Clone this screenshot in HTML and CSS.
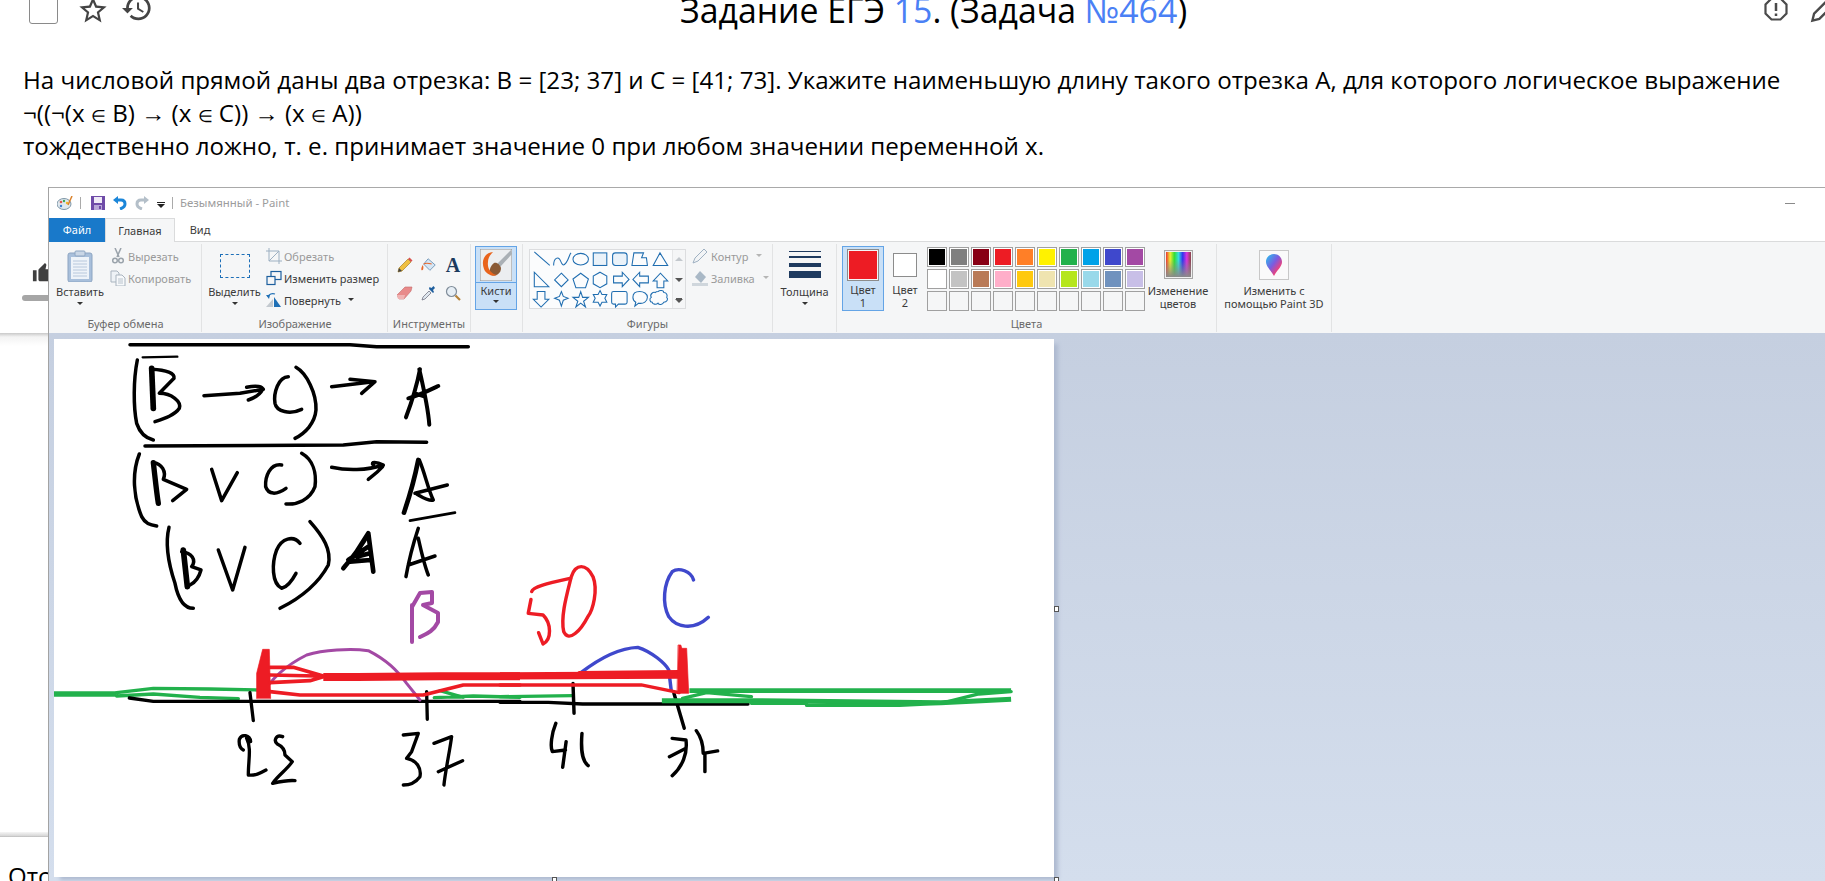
FILE: index.html
```html
<!DOCTYPE html>
<html lang="ru">
<head>
<meta charset="utf-8">
<title>Задание ЕГЭ 15</title>
<link rel="stylesheet" href="styles.css">
</head>
<body>
<main class="page">
  <header class="topbar">
    <div class="top-left">
      <span class="checkbox"></span>
      <svg class="ic-star" viewBox="1 1 22 21"><path d="M22 9.24l-7.19-.62L12 2 9.19 8.63 2 9.24l5.46 4.73L5.82 21 12 17.27 18.18 21l-1.63-7.03L22 9.24zM12 15.4l-3.76 2.27 1-4.28-3.32-2.88 4.38-.38L12 6.1l1.71 4.04 4.38.38-3.32 2.88 1 4.28L12 15.4z"/></svg>
      <svg class="ic-history" viewBox="1 3 22 18"><path d="M13 3c-4.97 0-9 4.03-9 9H1l3.89 3.89.07.14L9 12H6c0-3.87 3.13-7 7-7s7 3.13 7 7-3.13 7-7 7c-1.93 0-3.68-.79-4.94-2.06l-1.42 1.42C8.27 19.99 10.51 21 13 21c4.97 0 9-4.03 9-9s-4.03-9-9-9zm-1 5v5l4.28 2.54.72-1.21-3.5-2.08V8H12z"/></svg>
    </div>
    <h1 class="title">Задание ЕГЭ <a href="#">15</a>. (Задача <a href="#">№464</a>)</h1>
    <div class="top-right">
      <svg class="ic-report" viewBox="0 0 24 24"><polygon points="7.5,1.5 16.5,1.5 22.5,7.5 22.5,16.5 16.5,22.5 7.5,22.5 1.5,16.5 1.5,7.5"/><path class="mark" d="M12 6v8M12 16.5v2.5"/></svg>
      <svg class="ic-edit" viewBox="0 0 24 24"><path d="M2 22l1.5-6L17 2.5l4.5 4.500L8 20.500z"/></svg>
    </div>
  </header>
  <p class="statement">На числовой прямой даны два отрезка: B = [23; 37] и C = [41; 73]. Укажите наименьшую длину такого отрезка A, для которого логическое выражение<br>¬((¬(x <span class="el">∈</span> B) <span class="sym">→</span> (x <span class="el">∈</span> C)) <span class="sym">→</span> (x <span class="el">∈</span> A))<br>тождественно ложно, т. е. принимает значение 0 при любом значении переменной x.</p>
  <div class="like-row">
    <svg class="ic-thumb" viewBox="0 0 24 24"><path d="M1 21h4V9H1v12zm22-11c0-1.100-.9-2-2-2h-6.310l.95-4.570.03-.32c0-.41-.17-.79-.44-1.060L14.170 1 7.590 7.590C7.220 7.950 7 8.450 7 9v10c0 1.100.9 2 2 2h9c.83 0 1.540-.5 1.840-1.220l3.020-7.050c.09-.23.14-.47.14-.73v-2z"/></svg>
  </div>
  <div class="like-bar"></div>
  <div class="card-edge"></div>
  <div class="card-foot"></div>
  <div class="answers">Отсортировать</div>
</main>

<section class="paint">
  <div class="titlebar">
    <svg class="qa ic-app" viewBox="0 0 16 14"><ellipse cx="7" cy="8" rx="7" ry="5.500" fill="#dfe8ee" stroke="#7f97a8"/><circle cx="4" cy="6" r="1.300" fill="#e05a4e"/><circle cx="7" cy="5" r="1.200" fill="#3aa655"/><circle cx="10" cy="7" r="1.200" fill="#f0b429"/><circle cx="4" cy="10" r="1.200" fill="#3a7fd0"/><path d="M11 9L15 0" stroke="#d9822b" stroke-width="1.500"/></svg>
    <span class="qa-sep"></span>
    <svg class="qa ic-save" viewBox="0 0 14 14"><path fill="#6f4ba8" d="M0 0h14v14H0z"/><path fill="#efeaf6" d="M3 1h8v6H3z"/><path fill="#b9a7d8" d="M3 9h8v5H3z"/><path fill="#6f4ba8" d="M8 10h2v3H8z"/></svg>
    <svg class="qa ic-undo" viewBox="0 0 14 14"><path fill="none" stroke="#1b86d9" stroke-width="3" d="M3 4h5c3 0 4 2 4 4s-2 4-5 5"/><path fill="#1b86d9" d="M5 0v8L0 4z"/></svg>
    <svg class="qa ic-redo" viewBox="0 0 14 14"><path fill="none" stroke="#b4bfc9" stroke-width="3" d="M11 4H6C3 4 2 6 2 8s2 4 5 5"/><path fill="#b4bfc9" d="M9 0v8l5-4z"/></svg>
    <svg class="qa ic-more" viewBox="0 0 8 6"><path d="M0 0h8v1H0zM0 2h8L4 6z" fill="#222"/></svg>
    <span class="qa-sep sep2"></span>
    <span class="win-title">Безымянный - Paint</span>
    <span class="win-min"></span>
  </div>
  <nav class="tabs">
    <span class="tab tab-file">Файл</span>
    <span class="tab tab-home">Главная</span>
    <span class="tab tab-view">Вид</span>
  </nav>
  <div class="ribbon">
    <div class="grp g1">
      <div class="grp-body">
        <div class="big w60">
          <svg class="big-ic" viewBox="0 0 32 32"><rect x="4" y="3" width="24" height="29" rx="2" fill="#a8bfdb" stroke="#8da5c2"/><rect x="7" y="7" width="18" height="22" fill="#eef3f9"/><path d="M9 11h14M9 14h14M9 17h14M9 20h14M9 23h14M9 26h14" stroke="#b8c8dc"/><rect x="11" y="1" width="10" height="5" rx="1" fill="#c9d6e6" stroke="#8da5c2"/></svg>
          <span class="lbl">Вставить</span><i class="caret"></i>
        </div>
        <div class="smalls">
          <div class="small off"><svg viewBox="0 0 16 16"><path d="M5 0l4 9M11 0L7 9" stroke="#9aa3ab" stroke-width="1.500" fill="none"/><circle cx="5" cy="12.500" r="2.300" fill="none" stroke="#9aa3ab" stroke-width="1.500"/><circle cx="11" cy="12.500" r="2.300" fill="none" stroke="#9aa3ab" stroke-width="1.500"/></svg>Вырезать</div>
          <div class="small off"><svg viewBox="0 0 16 16"><path d="M1 1h6l2 2v9H1z" fill="#eef2f6" stroke="#a9b4bf"/><path d="M6 5h6l3 3v8H6z" fill="#f7f9fb" stroke="#a9b4bf"/><path d="M8 9h5M8 11h5M8 13h5" stroke="#b8c2cc"/></svg>Копировать</div>
        </div>
      </div>
      <div class="grp-label">Буфер обмена</div>
    </div>
    <div class="grp g2">
      <div class="grp-body">
        <div class="big w63">
          <span class="select-ic"></span>
          <span class="lbl">Выделить</span><i class="caret"></i>
        </div>
        <div class="smalls">
          <div class="small off"><svg viewBox="0 0 16 16"><path d="M3 0v13h13M0 3h13v13M3 13L13 3" fill="none" stroke="#9db0c2"/></svg>Обрезать</div>
          <div class="small"><svg viewBox="0 0 16 16"><rect x="5" y="1.500" width="10" height="8" fill="none" stroke="#1d5f9e" stroke-width="1.200"/><rect x="1" y="6.500" width="8" height="8" fill="#f5f6f7" stroke="#1d5f9e" stroke-width="1.200"/></svg>Изменить размер</div>
          <div class="small"><svg viewBox="0 0 16 16"><path d="M0 15L7 7v8z" fill="#c3c9cf"/><path d="M8 15V5l7 10z" fill="#1f6fb5"/><path d="M2 5c1-3 4-4 7-3" fill="none" stroke="#1f6fb5" stroke-width="1.300"/><path d="M0 3l4 0-1 4z" fill="#1f6fb5"/></svg>Повернуть<i class="caret inl"></i></div>
        </div>
      </div>
      <div class="grp-label">Изображение</div>
    </div>
    <div class="grp g3">
      <div class="grp-body tools">
        <span class="tool"><svg viewBox="0 0 16 16"><path d="M1 15l1-4L11 2l3 3-9 9z" fill="#f0c040" stroke="#a9822b" stroke-width=".7"/><path d="M11 2l1.500-1.500 3 3L14 5z" fill="#d9534f"/><path d="M1 15l1-4 3 3z" fill="#444"/></svg></span>
        <span class="tool"><svg viewBox="0 0 18 16"><path d="M8 1l8 7-6 6-7-7z" fill="#d6e6f4" stroke="#6d93b5"/><path d="M2 8C0 11 0 14 1 14c1.500 0 2-3 1.500-5z" fill="#e8662a"/><path d="M3 7c3-2 6-1 9 0" fill="none" stroke="#e8662a" stroke-width="1.200"/></svg></span>
        <span class="tool tool-a">A</span>
        <span class="tool"><svg viewBox="0 0 16 16"><path d="M0 10l8-8h7l-1 4-7 8H2z" fill="#e88a8a" stroke="#c46a6a" stroke-width=".6"/><path d="M0 10l1 4h6l1-4z" fill="#f0b3b3"/></svg></span>
        <span class="tool"><svg viewBox="0 0 16 16"><path d="M1 15l1-3 6-6 2 2-6 6z" fill="#dfe7ee" stroke="#667"  stroke-width=".7"/><path d="M8 4l4 4 1-1-1-2 2-2-1.500-2-2 2-2-1z" fill="#1f5f9e"/></svg></span>
        <span class="tool"><svg viewBox="0 0 16 16"><circle cx="6.500" cy="6.500" r="5" fill="#e6eef5" stroke="#7f8c99" stroke-width="1.200"/><path d="M10.500 10.500L15 15" stroke="#b5823a" stroke-width="2.200"/></svg></span>
      </div>
      <div class="grp-label">Инструменты</div>
    </div>
    <div class="grp g4">
      <div class="grp-body">
        <div class="brush-btn">
          <div class="brush-top"><svg viewBox="0 0 32 32"><rect x="0" y="0" width="32" height="32" fill="#eceef0" stroke="#8f8f8f"/><path d="M31 1L17 15l3 3L32 5z" fill="#aab0b5"/><path d="M14 14c-4 3-6 10-3 12 4 2 10-1 10-7-1-3-4-6-7-5z" fill="#8a5a35"/><path d="M13 3C4 4 1 12 4 20c2 5 8 8 13 6-6-1-10-6-9-13 0-4 2-7 5-10z" fill="#e9641c"/></svg></div>
          <span class="lbl">Кисти</span><i class="caret"></i>
        </div>
      </div>
    </div>
    <div class="grp g5">
      <div class="grp-body">
        <div class="gallery">
          <svg class="shapes" viewBox="0 0 142 60">
            <g fill="none" stroke="#1f6db0" stroke-width="1.100">
              <path d="M2 2L18 16"/>
              <path d="M22 16c0-8 5-10 7-5s3 6 6 2 3-8 5-10"/>
              <ellipse cx="50" cy="9.500" rx="8" ry="6"/>
              <rect x="63" y="3" width="14" height="13" fill="#eaf2f9"/>
              <rect x="83" y="3" width="15" height="13" rx="3" fill="#eaf2f9"/>
              <path d="M105 3h10l-2 5h5l1 8h-16z"/>
              <path d="M132 3l8 13h-15z"/>
              <path d="M2 23v15h15z"/>
              <path d="M30 24l7 7-7 7-7-7z"/>
              <path d="M50 24l8 6-3 9h-10l-3-9z"/>
              <path d="M70 23l7 4v8l-7 4-7-4v-8z"/>
              <path d="M84 27h9v-4l7 7.500-7 7.500v-4h-9z"/>
              <path d="M120 27h-9v-4l-7 7.500 7 7.500v-4h9z"/>
              <path d="M125 32h4v7h7v-7h4l-7.500-8z"/>
              <path d="M5 43h8v8h4l-8 8-8-8h4z"/>
              <path d="M30 43l2 5 5 2-5 2-2 6-2-6-5-2 5-2z"/>
              <path d="M50 43l2 6h6l-5 4 2 6-5-4-5 4 2-6-5-4h6z"/>
              <path d="M70 42l2 4h5l-2 4 2 4h-5l-2 4-2-4h-5l2-4-2-4h5z"/>
              <path d="M84 43h12a2 2 0 0 1 2 2v9a2 2 0 0 1-2 2h-7l-3 3v-3h-2a2 2 0 0 1-2-2v-9a2 2 0 0 1 2-2z"/>
              <path d="M111 43c4 0 8 2 8 6s-4 7-9 6l-4 3 1-4c-2-1-3-3-3-5 0-4 3-6 7-6z"/>
              <path d="M130 43c2-2 6-1 6 1 3 0 4 3 3 5 2 2 0 5-3 5-1 3-5 3-6 1-2 2-6 1-6-1-3 0-3-4-1-5-2-3 2-6 4-5 1-1 2-1 3-1z"/>
            </g>
          </svg>
          <div class="gal-scroll">
            <i class="up"></i><i class="down"></i><i class="more"></i>
          </div>
        </div>
        <div class="smalls smalls-shape">
          <div class="small off"><svg viewBox="0 0 16 16"><path d="M1 15l2-5L12 1l3 3-9 9z" fill="#f2f4f6" stroke="#9fb1c2"/></svg>Контур<i class="caret inl pale"></i></div>
          <div class="small off"><svg viewBox="0 0 16 16"><path d="M8 1l6 6-5 6-6-6z" fill="#a9b8c6"/><path d="M0 13h16v3H0z" fill="#cfd6dc"/></svg>Заливка<i class="caret inl pale"></i></div>
        </div>
      </div>
      <div class="grp-label">Фигуры</div>
    </div>
    <div class="grp g6">
      <div class="grp-body">
        <div class="big full">
          <div class="thick"><i class="t1"></i><i class="t2"></i><i class="t3"></i><i class="t4"></i></div>
          <span class="lbl">Толщина</span><i class="caret"></i>
        </div>
      </div>
    </div>
    <div class="grp g7">
      <div class="grp-body">
        <div class="color-btn active">
          <span class="swatch-big"></span>
          <span class="lbl">Цвет<br>1</span>
        </div>
        <div class="color-btn">
          <span class="swatch-mid"></span>
          <span class="lbl">Цвет<br>2</span>
        </div>
        <div class="palette">
          <i class="c c1"></i><i class="c c2"></i><i class="c c3"></i><i class="c c4"></i><i class="c c5"></i><i class="c c6"></i><i class="c c7"></i><i class="c c8"></i><i class="c c9"></i><i class="c c10"></i>
          <i class="c c11"></i><i class="c c12"></i><i class="c c13"></i><i class="c c14"></i><i class="c c15"></i><i class="c c16"></i><i class="c c17"></i><i class="c c18"></i><i class="c c19"></i><i class="c c20"></i>
          <i class="c e"></i><i class="c e"></i><i class="c e"></i><i class="c e"></i><i class="c e"></i><i class="c e"></i><i class="c e"></i><i class="c e"></i><i class="c e"></i><i class="c e"></i>
        </div>
        <div class="big w66">
          <span class="rainbow"></span>
          <span class="lbl">Изменение<br>цветов</span>
        </div>
      </div>
      <div class="grp-label">Цвета</div>
    </div>
    <div class="grp g8">
      <div class="grp-body">
        <div class="big full">
          <span class="p3d-box"><svg viewBox="0 0 22 30"><defs><linearGradient id="p3d" x1="0" y1="0" x2="1" y2="1"><stop offset="0" stop-color="#22c8f0"/><stop offset=".45" stop-color="#7a5ce0"/><stop offset=".75" stop-color="#f0417a"/><stop offset="1" stop-color="#ffb020"/></linearGradient></defs><path d="M11 0c6 0 11 4.500 11 11 0 6-7 12-11 19C7 23 0 17 0 11 0 4.500 5 0 11 0z" fill="url(#p3d)"/></svg></span>
          <span class="lbl">Изменить с<br>помощью Paint 3D</span>
        </div>
      </div>
    </div>
  </div>
  <div class="workspace">
    <div class="canvas">
      <svg class="drawing" viewBox="54 339 1000 538" fill="none" stroke-linecap="round" stroke-linejoin="round">
        <g transform="translate(100 330) scale(.3333)" stroke="#000" stroke-width="10.500">
          <path d="M90 44H650L750 44 830 50H1105"/>
          <path d="M128 82L232 80" stroke-width="7"/>
          <path d="M112 90C100 150 100 230 110 280 120 310 140 325 160 330"/>
          <path d="M155 115L160 235" stroke-width="17"/>
          <path d="M155 118C200 120 225 130 222 145L178 190C215 190 245 215 238 235 225 255 195 265 165 275"/>
          <path d="M312 197L420 190 490 178M440 172C470 165 490 170 488 178 480 195 460 205 445 210"/>
          <path d="M565 140C535 140 520 190 525 220 530 245 570 255 605 238"/>
          <path d="M588 112C620 130 650 190 648 240 645 280 615 310 585 325"/>
          <path d="M695 170L820 155M750 148L825 155 785 190"/>
          <path d="M960 118C950 170 930 230 918 262M958 118C970 170 985 240 988 284M925 205C960 195 990 180 1015 168M945 190L975 200" stroke-width="12"/>
          <path d="M135 348L730 345 830 335 980 337"/>
          <path d="M118 372C95 430 100 500 125 560 135 580 150 585 170 588"/>
          <path d="M160 398C165 440 170 490 175 520" stroke-width="16"/>
          <path d="M160 398C185 400 200 425 190 448L260 478 218 512"/>
          <path d="M335 418L365 512 412 428"/>
          <path d="M545 405C510 400 495 440 497 470 505 495 530 495 558 475"/>
          <path d="M605 370C640 390 650 430 645 470 630 510 590 525 558 522"/>
          <path d="M695 412C740 422 800 422 850 405 830 395 810 395 820 405M848 410C830 430 815 440 805 448"/>
          <path d="M955 390C945 440 925 510 912 548" stroke-width="14"/>
          <path d="M958 390C975 430 985 480 1000 510 985 515 965 500 950 492M945 490L1042 465"/>
          <path d="M930 572L1065 548" stroke-width="8"/>
          <path d="M207 592C195 640 205 700 225 760 235 810 255 835 280 835"/>
          <path d="M250 660L262 770" stroke-width="17"/>
          <path d="M245 665C275 668 290 690 275 710L303 720C295 750 280 760 270 765"/>
          <path d="M355 660L398 780 435 652"/>
          <path d="M600 640C580 615 545 625 530 660 515 700 515 760 545 775 565 770 580 745 588 730"/>
          <path d="M630 575C670 620 695 660 685 705 650 770 590 810 540 835"/>
          <path d="M730 715C760 680 790 640 805 610L820 725M745 690L805 650M760 680L805 610M770 680L810 670M750 695L812 690" stroke-width="14"/>
          <path d="M955 595C940 640 925 700 918 740M955 625C965 670 975 710 985 735M925 705L1005 678"/>
        </g>
        <path stroke="#a349a4" stroke-width="4" d="M412 642V605M412 607L420 593 432 592 432 603 423 605 438 613 438 622C433 632 426 634 420 637"/>
        <g transform="translate(40 620) scale(.3333)" stroke-width="10">
          <g stroke="#22b14c">
            <path d="M42 222H230" stroke-width="17" stroke-linecap="butt"/>
            <path d="M230 218L340 205 510 207 655 210M230 228L340 222 480 232 595 236"/>
          </g>
          <g stroke="#000">
            <path d="M268 234L340 244H1440"/>
            <path d="M630 218L640 302M1160 215L1162 298"/>
            <path d="M632 365C630 345 605 340 598 358 596 375 600 385 610 390M620 355C635 385 625 420 625 465 645 468 660 460 678 450"/>
            <path d="M728 350C708 342 700 362 712 372 725 378 735 390 735 405L757 425C740 450 715 465 698 490 720 485 745 480 765 482"/>
            <path d="M1090 345L1135 340 1115 395 1100 415C1130 420 1145 445 1140 470 1125 490 1110 495 1090 495"/>
            <path d="M1182 370L1235 350C1230 390 1215 460 1212 495M1195 455L1268 422"/>
          </g>
          <path stroke="#22b14c" d="M1183 233L1300 228 1440 232M1200 212L1270 232"/>
          <path stroke="#a349a4" stroke-width="9" d="M665 228C690 180 730 140 800 105 850 90 930 85 985 92 1040 120 1070 150 1100 190L1140 240"/>
          <g stroke="#ed1c24">
            <path d="M650 235V160L668 88H688L692 235Z" fill="#ed1c24" stroke-width="2"/>
            <path d="M850 171L950 171 1200 169H1440" stroke-width="24" stroke-linecap="butt"/>
            <path d="M690 142L760 142 850 168M690 165L830 168M690 188L810 182 850 170M690 215L780 225H1150L1270 195H1440" stroke-width="11"/>
          </g>
        </g>
        <g transform="translate(500 560) scale(.3444 .3333)" stroke-width="10">
          <g stroke="#22b14c">
            <path d="M0 410L210 407"/>
          </g>
          <g stroke="#000">
            <path d="M0 427L140 427 240 432H720"/>
            <path d="M212 370L215 460M505 400L535 505"/>
            <path d="M162 490C150 520 145 560 152 575L190 570M192 545L182 622M238 520C235 560 235 600 256 617"/>
            <path d="M500 535L540 540C545 580 530 620 500 647M492 590L540 565M570 512C590 540 590 570 590 580L632 573M595 580V635"/>
          </g>
          <g stroke="#22b14c">
            <path d="M470 422H730L890 424 1280 428 1484 418" stroke-width="15" stroke-linecap="butt"/>
            <path d="M550 392H1484" stroke-width="14" stroke-linecap="butt"/>
            <path d="M530 415L600 398 730 410M730 430H890M890 436H1160L1280 430 1390 402 1484 395"/>
          </g>
          <g stroke="#3f48cc">
            <path d="M235 338C270 310 330 265 400 262 440 275 480 310 490 330L497 390"/>
            <path d="M562 60C555 35 520 20 500 35 475 70 470 130 490 170 510 200 560 215 605 172"/>
          </g>
          <g stroke="#ed1c24">
            <path d="M0 348L520 345" stroke-width="22" stroke-linecap="butt"/>
            <path d="M230 338L520 335M0 375H380L410 375 520 398"/>
            <path d="M518 255H525L528 265H542L548 400H515Z" fill="#ed1c24" stroke-width="2"/>
            <path d="M92 95C95 80 140 70 205 55M90 118L82 160 125 165C150 190 150 240 125 252L112 218"/>
            <path d="M207 50C220 10 250 10 270 50 285 90 270 150 255 170 235 210 200 250 185 215 175 170 195 100 207 50Z"/>
          </g>
        </g>
      </svg>
      <i class="handle h-right"></i>
      <i class="handle h-corner"></i>
      <i class="handle h-bottom"></i>
    </div>
  </div>
</section>
</body>
</html>
```

FILE: styles.css
```css
* { box-sizing: border-box; }
html, body { margin: 0; height: 881px; overflow: hidden; background: #fff; }
body { position: relative; font-family: "Open Sans", "Noto Sans", sans-serif; color: #000; }
.page { height: 881px; display: flex; flex-direction: column; overflow: hidden; }

.topbar { display: flex; height: 30px; margin-top: -6px; flex: none; align-items: flex-end; }
.top-left { width: 680px; flex: none; display: flex; align-items: flex-end; height: 30px; padding-left: 29px; }
.checkbox { width: 29px; height: 30px; border: 1.5px solid #8a8a8a; border-radius: 3px; flex: none; }
.ic-star { width: 30px; height: 29px; margin-left: 20px; fill: #444; flex: none; }
.ic-history { width: 30px; height: 28px; margin-left: 14px; margin-bottom: 2px; fill: #444; flex: none; }
.title { margin: -7px 0 0; font-size: 33.800px; font-weight: 400; line-height: 46px; white-space: nowrap; align-self: flex-start; }
.title a { color: #4a80f5; text-decoration: none; }
.top-right { margin-left: auto; display: flex; align-items: flex-end; height: 30px; margin-bottom: 1px; }
.ic-report { width: 24px; height: 28px; fill: none; stroke: #4a4a4a; stroke-width: 2.2; flex: none; }
.ic-report .mark { stroke-width: 2.5; }
.ic-edit { width: 30px; height: 28px; margin-left: 21px; margin-right: -14px; fill: none; stroke: #4a4a4a; stroke-width: 2; flex: none; }

.statement { margin: 39px 0 0 23px; font-size: 24.150px; line-height: 33px; white-space: nowrap; flex: none; }
.sym { font-family: "Liberation Sans", "Noto Sans", sans-serif; line-height: 1; }
.el { font-family: "Liberation Sans", "Noto Sans", sans-serif; font-size: 17px; line-height: 1; }

.like-row { height: 22px; margin-top: 100px; padding-left: 32px; flex: none; }
.ic-thumb { width: 22px; height: 22px; fill: #3f3f3f; display: block; }
.like-bar { width: 60px; height: 6px; margin: 11px 0 0 22px; border-radius: 3px; background: #a6a6a6; flex: none; }
.card-edge { height: 13px; margin-top: 32px; background: linear-gradient(#c9c9c9, #f3f3f3 30%, #fff); flex: none; }
.card-foot { height: 5px; margin-top: 486px; background: linear-gradient(#f5f5f5, #d8d8d8 75%, #b9b9b9); flex: none; }
.answers { margin: 22px 0 0 8px; font-size: 24px; line-height: 33px; white-space: nowrap; flex: none; }

/* Paint window floats over the page like a desktop window */
.paint { position: absolute; left: 48px; top: 187px; right: 0; bottom: 0; display: flex; flex-direction: column; background: #fff; border-left: 1px solid #a3a3a3; border-top: 1px solid #a9a9a9; font-family: "Noto Sans", "Open Sans", sans-serif; font-size: 11px; color: #3b3b3b; overflow: hidden; }
.titlebar { height: 30px; display: flex; align-items: center; padding-left: 8px; flex: none; }
.qa { display: block; flex: none; }
.ic-app { width: 16px; height: 14px; }
.qa-sep { width: 1px; height: 12px; background: #aaa; margin: 0 10px 0 7px; flex: none; }
.ic-save { width: 14px; height: 14px; }
.ic-undo { width: 14px; height: 14px; margin-left: 8px; }
.ic-redo { width: 14px; height: 14px; margin-left: 8px; }
.ic-more { width: 8px; height: 6px; margin-left: 8px; margin-top: 3px; }
.sep2 { margin: 0 7px; height: 12px; }
.win-title { font-size: 11.400px; color: #9c9c9c; white-space: nowrap; margin-top: -2px; }
.win-min { width: 10px; height: 1px; background: #8a8a8a; margin-left: auto; margin-right: 30px; flex: none; }

.tabs { height: 24px; display: flex; flex: none; position: relative; }
.tab { height: 24px; line-height: 23px; text-align: center; font-size: 11px; }
.tab-file { width: 56px; background: #1979ca; color: #fff; }
.tab-home { width: 70px; background: #f5f6f7; border: 1px solid #dadbdc; border-bottom: 0; color: #3b3b3b; }
.tab-view { width: 50px; color: #3b3b3b; }

.ribbon { height: 92px; background: #f5f6f7; border-top: 1px solid #dadbdc; display: flex; flex: none; margin-top: -1px; }
.grp { display: flex; flex-direction: column; height: 88px; margin-top: 2px; border-right: 1px solid #e2e3e4; flex: none; }
.g1 { width: 153px; padding-left: 1px; }
.g2 { width: 186px; padding-left: 1px; }
.g3 { width: 83px; }
.g4 { width: 52px; }
.g5 { width: 250px; }
.g6 { width: 64px; }
.g7 { width: 380px; }
.g8 { width: 115px; }
.grp-body { height: 72px; display: flex; flex: none; padding-top: 3px; }
.grp-label { flex: 1; text-align: center; line-height: 16px; color: #6a6a6a; white-space: nowrap; }

.big { display: flex; flex-direction: column; align-items: center; padding-top: 3px; flex: none; }
.w60 { width: 60px; }
.w63 { width: 63px; }
.w66 { width: 66px; }
.full { width: 100%; }
.big-ic { width: 32px; height: 32px; display: block; flex: none; }
.lbl { display: block; margin-top: 3px; line-height: 13px; text-align: center; white-space: nowrap; }
.caret { display: block; width: 0; height: 0; margin-top: 4px; border: 3.500px solid transparent; border-top-color: #333; border-bottom: 0; flex: none; }
.caret.inl { display: inline-block; margin: 0 0 2px 5px; vertical-align: middle; }
.caret.pale { border-top-color: #b5b5b5; }

.smalls { display: flex; flex-direction: column; flex: none; margin-top: -2px; }
.small { height: 22px; display: flex; align-items: center; gap: 2px; white-space: nowrap; }
.small svg { width: 16px; height: 16px; flex: none; }
.small.off { color: #9a9a9a; }
.smalls-shape { margin-left: 6px; }
.smalls-shape .small { gap: 3px; }

.select-ic { width: 30px; height: 24px; margin: 4px 0; border: 1px dashed #1d6fb8; flex: none; }
.tools { display: grid; grid-template-columns: repeat(3, 24px); grid-auto-rows: 28px; padding: 7px 0 0 5px; align-content: start; }
.tool { display: flex; align-items: center; justify-content: center; }
.tool svg { width: 16px; height: 16px; }
.tool-a { font-family: "Liberation Serif", serif; font-weight: 700; font-size: 20px; color: #1c3a5e; }

.brush-btn { width: 42px; height: 64px; margin-left: 4px; margin-top: -1px; background: #c9e0f7; border: 1px solid #64a4e6; display: flex; flex-direction: column; align-items: center; }
.brush-top { width: 100%; height: 36px; padding: 2px 4px 0; border-bottom: 1px solid #64a4e6; flex: none; }
.brush-top svg { width: 32px; height: 32px; display: block; }
.brush-btn .lbl { margin-top: 1px; }
.brush-btn .caret { margin-top: 3px; }

.gallery { width: 157px; height: 60px; margin: 2px 0 0 6px; background: #fbfcfd; border: 1px solid #dcdddf; display: flex; flex: none; }
.shapes { width: 142px; height: 58px; flex: none; }
.gal-scroll { flex: 1; background: #f5f6f7; border-left: 1px solid #e6e7e8; display: flex; flex-direction: column; align-items: center; justify-content: space-between; padding: 7px 0 5px; }
.gal-scroll i { display: block; width: 0; height: 0; border: 4px solid transparent; }
.gal-scroll .up { border-top: 0; border-bottom-color: #c3c8cd; }
.gal-scroll .down { border-bottom: 0; border-top-color: #555; }
.gal-scroll .more { border-bottom: 0; border-top-color: #555; box-shadow: 0 -2px 0 -1px #555; }

.thick { width: 32px; height: 28px; margin: 1px 0 3px; display: flex; flex-direction: column; flex: none; }
.thick i { display: block; background: #1e3a5f; flex: none; }
.t1 { height: 1px; }
.t2 { height: 2px; margin-top: 4px; }
.t3 { height: 4px; margin-top: 5px; }
.t4 { height: 7px; margin-top: 4px; }

.color-btn { width: 42px; height: 65px; margin-left: 5px; margin-top: -1px; padding-top: 2px; border: 1px solid transparent; display: flex; flex-direction: column; align-items: center; flex: none; }
.color-btn + .color-btn { margin-left: 0; }
.color-btn.active { background: #c9e0f7; border-color: #64a4e6; }
.color-btn .lbl { margin-top: 2px; }
.swatch-big { width: 32px; height: 32px; background: #ed1c24; border: 1px solid #8c8c8c; outline: 1px solid #f5f6f7; outline-offset: -2px; flex: none; }
.swatch-mid { width: 24px; height: 24px; margin: 4px 0; background: #fff; border: 1px solid #8c8c8c; flex: none; }

.palette { display: grid; grid-template-columns: repeat(10, 20px); grid-auto-rows: 20px; gap: 2px; margin: 0 0 0 1px; align-content: start; flex: none; }
.c { display: block; border: 1px solid #a0a0a0; outline: 1px solid #fff; outline-offset: -2px; }
.c.e { outline: 0; background: #f5f6f7; }
.c1 { background: #000; } .c2 { background: #7f7f7f; } .c3 { background: #880015; } .c4 { background: #ed1c24; } .c5 { background: #ff7f27; }
.c6 { background: #fff200; } .c7 { background: #22b14c; } .c8 { background: #00a2e8; } .c9 { background: #3f48cc; } .c10 { background: #a349a4; }
.c11 { background: #fff; } .c12 { background: #c3c3c3; } .c13 { background: #b97a57; } .c14 { background: #ffaec9; } .c15 { background: #ffc90e; }
.c16 { background: #efe4b0; } .c17 { background: #b5e61d; } .c18 { background: #99d9ea; } .c19 { background: #7092be; } .c20 { background: #c8bfe7; }

.rainbow { width: 29px; height: 29px; margin-top: 0; margin-bottom: 1px; border: 2px solid #f0f0f0; outline: 1px solid #a8a8a8; outline-offset: -1px; background: linear-gradient(transparent 30%, #8a8a8a), linear-gradient(90deg, #e33, #ee3, #3d3, #3dd, #33e, #d3d, #844); flex: none; }
.p3d-box { width: 30px; height: 30px; margin-top: 0; margin-bottom: 0; padding: 3px 6px; background: #fafafa; border: 1px solid #c8c8c8; flex: none; display: block; }
.p3d-box svg { width: 100%; height: 100%; display: block; }
.g7 .big .lbl, .g8 .big .lbl { margin-top: 4px; }

.workspace { flex: 1; padding: 6px 0 0 5px; background: linear-gradient(#c5cfe0, #d4deed); overflow: hidden; }
.canvas { position: relative; width: 1000px; height: 538px; background: #fff; box-shadow: 5px 4px 4px -1px #aebad0; }
.drawing { display: block; width: 1000px; height: 538px; }
.handle { position: absolute; width: 5px; height: 6px; background: #fff; border: 1px solid #555; }
.h-right { left: 1000px; top: 267px; }
.h-corner { left: 1000px; top: 538px; }
.h-bottom { left: 498px; top: 538px; }
```
